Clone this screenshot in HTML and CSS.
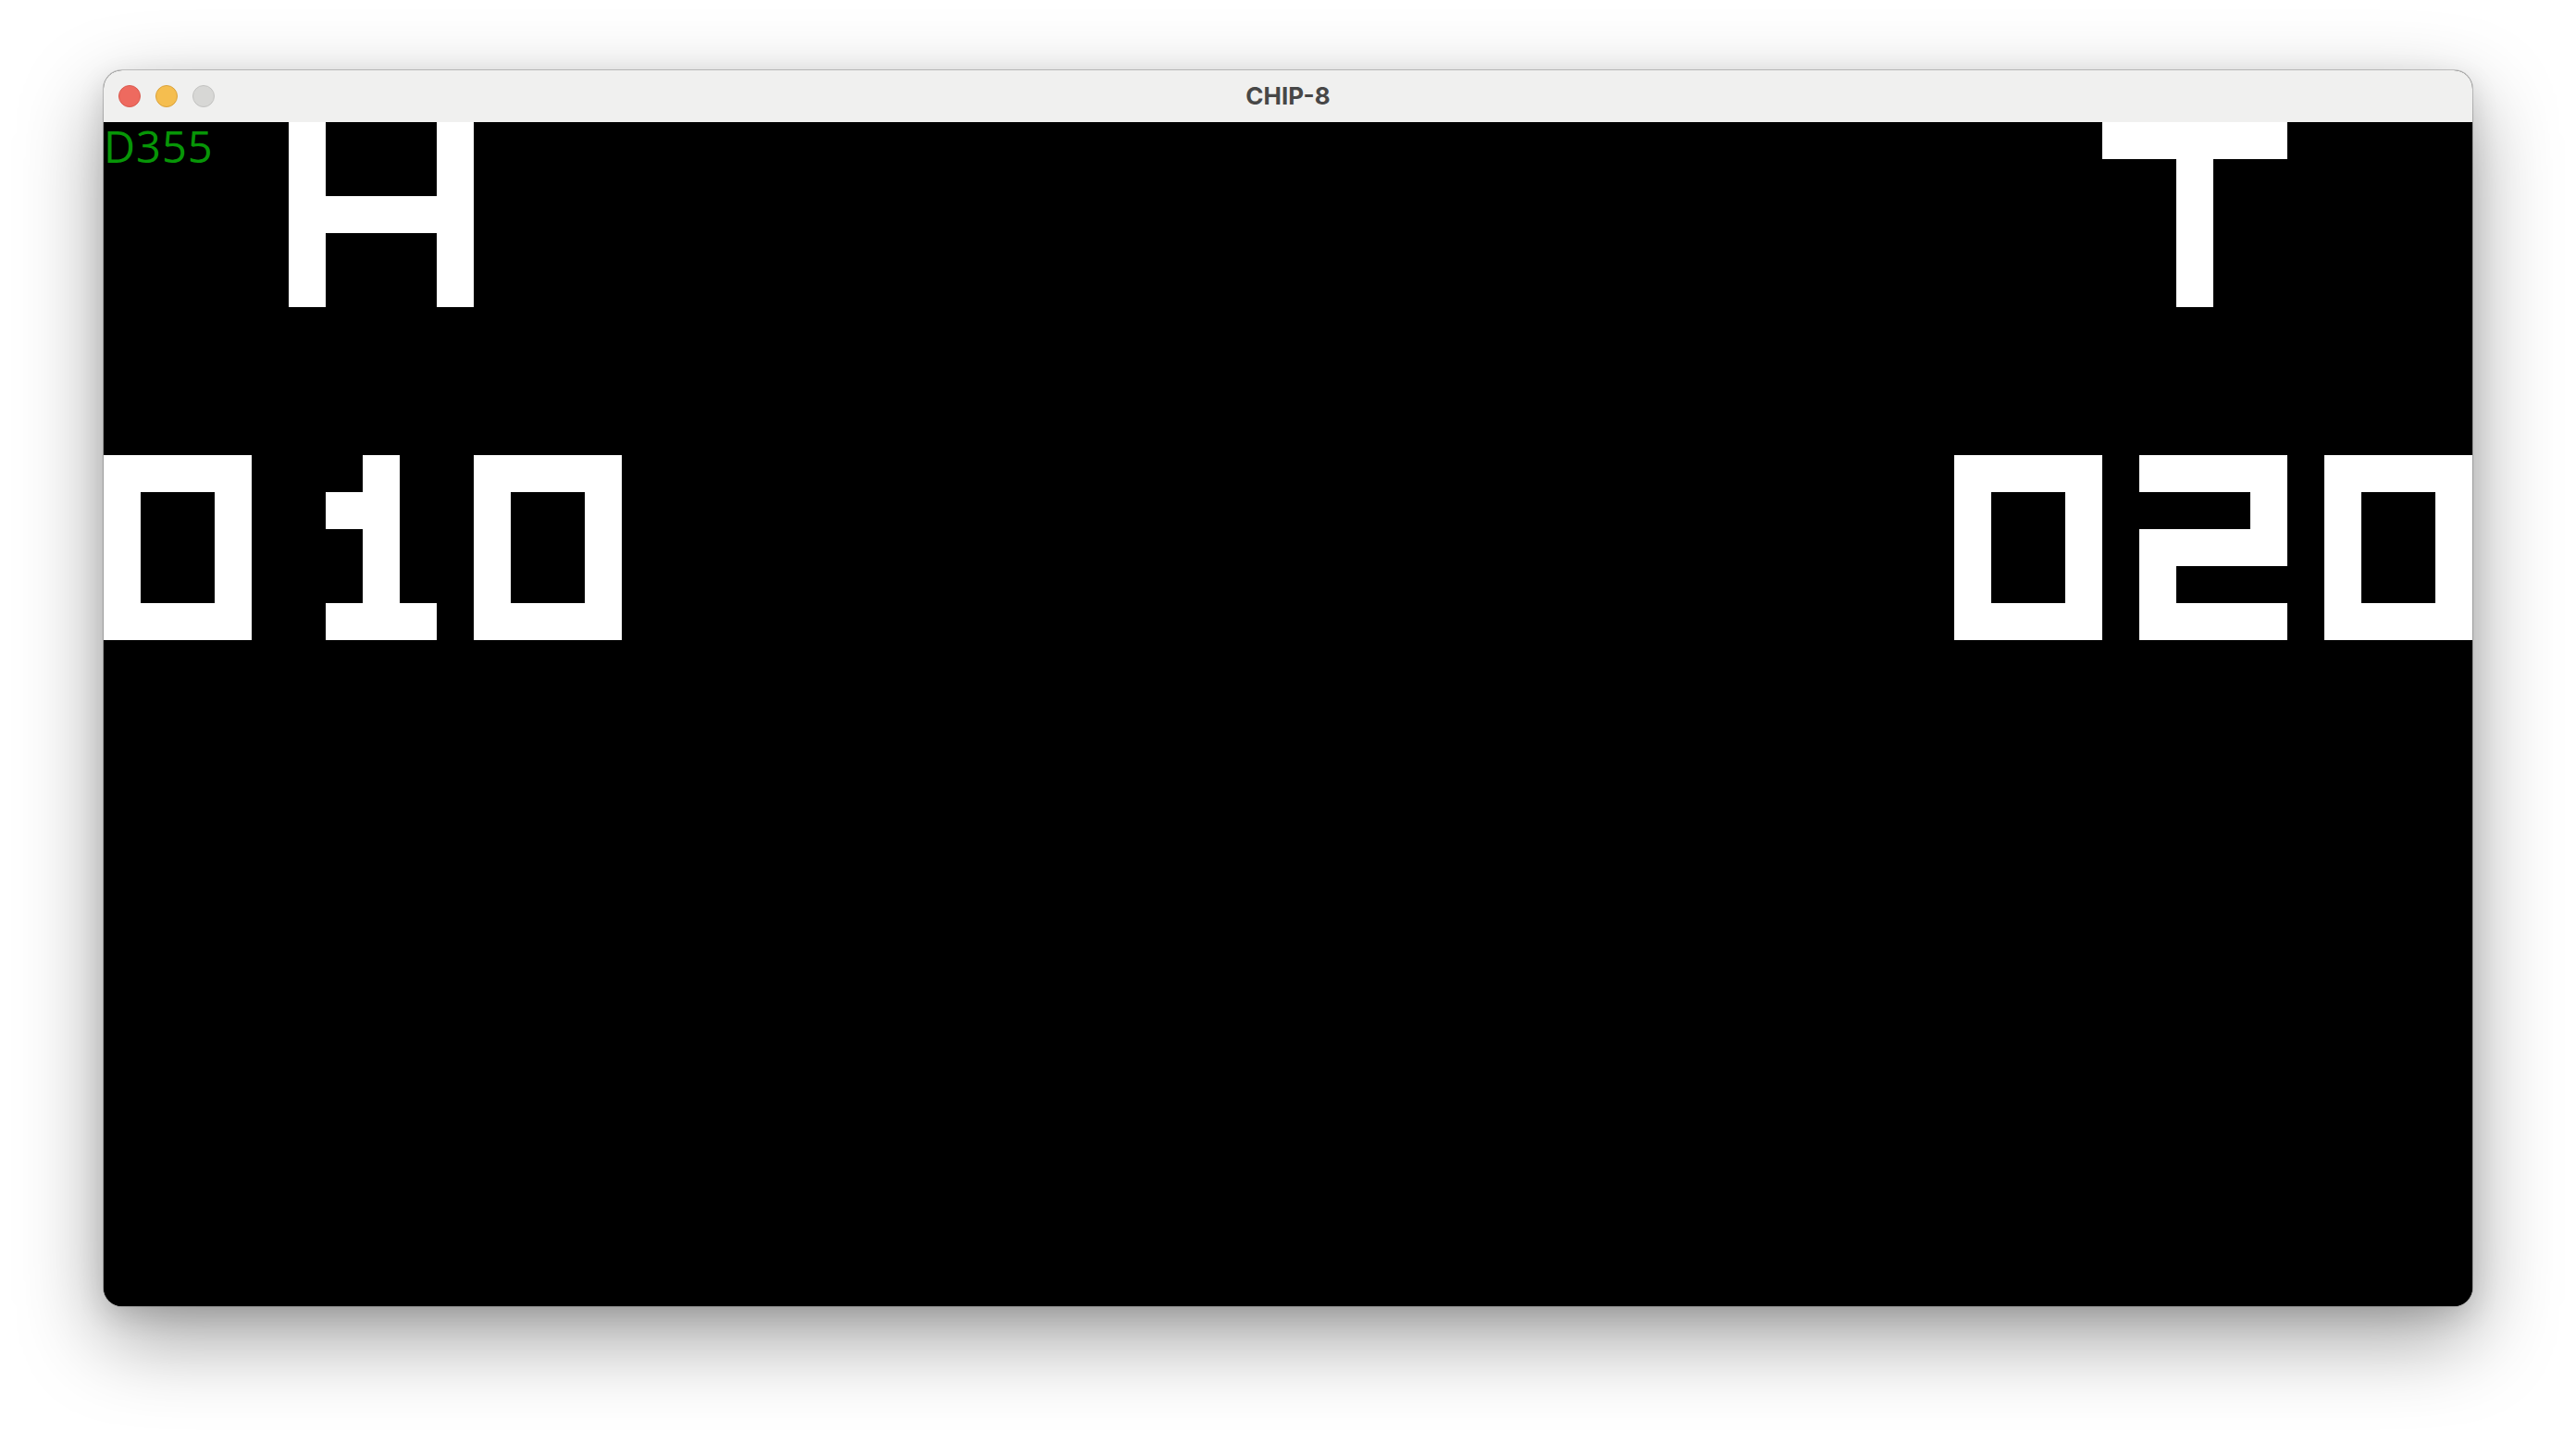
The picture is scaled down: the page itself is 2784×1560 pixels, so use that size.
FILE: index.html
```html
<!DOCTYPE html>
<html lang="en">
<head>
<meta charset="utf-8">
<title>CHIP-8</title>
<link rel="stylesheet" href="styles.css">
</head>
<body>
  <div class="window">
    <div class="titlebar">
      <div class="lights">
        <span class="light close"></span>
        <span class="light minimize"></span>
        <span class="light zoom"></span>
      </div>
      <div class="title">CHIP-8</div>
      <div class="spacer"></div>
    </div>
    <div class="display">
      <svg class="screen" width="2560" height="1280" viewBox="0 0 64 32" shape-rendering="crispEdges" xmlns="http://www.w3.org/2000/svg">
        <defs>
          <g id="d0">
            <rect x="0" y="0" width="4" height="1"/>
            <rect x="0" y="4" width="4" height="1"/>
            <rect x="0" y="1" width="1" height="3"/>
            <rect x="3" y="1" width="1" height="3"/>
          </g>
          <g id="d1">
            <rect x="2" y="0" width="1" height="5"/>
            <rect x="1" y="1" width="1" height="1"/>
            <rect x="1" y="4" width="3" height="1"/>
          </g>
          <g id="d2">
            <rect x="0" y="0" width="4" height="1"/>
            <rect x="3" y="1" width="1" height="1"/>
            <rect x="0" y="2" width="4" height="1"/>
            <rect x="0" y="3" width="1" height="1"/>
            <rect x="0" y="4" width="4" height="1"/>
          </g>
        </defs>
        <g fill="#ffffff">
          <!-- H -->
          <rect x="5" y="0" width="1" height="5"/>
          <rect x="9" y="0" width="1" height="5"/>
          <rect x="6" y="2" width="3" height="1"/>
          <!-- T -->
          <rect x="54" y="0" width="5" height="1"/>
          <rect x="56" y="1" width="1" height="4"/>
          <!-- 010 -->
          <use href="#d0" x="0" y="9"/>
          <use href="#d1" x="5" y="9"/>
          <use href="#d0" x="10" y="9"/>
          <!-- 020 -->
          <use href="#d0" x="50" y="9"/>
          <use href="#d2" x="55" y="9"/>
          <use href="#d0" x="60" y="9"/>
        </g>
      </svg>
      <span class="fps">D355</span>
    </div>
  </div>
</body>
</html>
```
FILE: styles.css
```css
html, body {
  margin: 0;
  padding: 0;
}

body {
  width: 2784px;
  height: 1560px;
  background: #ffffff;
  overflow: hidden;
  display: flex;
  justify-content: center;
  align-items: flex-start;
  padding-top: 76px;
  box-sizing: border-box;
}

.window {
  width: 2560px;
  height: 1336px;
  border-radius: 20px;
  overflow: hidden;
  display: flex;
  flex-direction: column;
  background: #000;
  box-shadow: 0 0 0 1px rgba(0, 0, 0, 0.2), 0 34px 90px rgba(0, 0, 0, 0.38), 0 10px 30px rgba(0, 0, 0, 0.12);
}

.titlebar {
  height: 56px;
  flex: 0 0 56px;
  background: #f0f0ef;
  display: grid;
  grid-template-columns: 1fr auto 1fr;
  align-items: center;
}

.lights {
  display: flex;
  gap: 16px;
  padding-left: 16px;
}

.light {
  width: 24px;
  height: 24px;
  border-radius: 50%;
  box-sizing: border-box;
  border: 1px solid;
}

.close {
  background: #ee6a5f;
  border-color: #d85a4f;
}

.minimize {
  background: #f5be4f;
  border-color: #d9a23d;
}

.zoom {
  background: #d7d7d5;
  border-color: #c2c2c0;
}

.title {
  font-family: Inter, "Liberation Sans", sans-serif;
  font-weight: 700;
  font-size: 26px;
  color: #474747;
  line-height: 1;
}

.display {
  position: relative;
  width: 2560px;
  height: 1280px;
  background: #000;
}

.screen {
  display: block;
}

.fps {
  position: absolute;
  top: 3px;
  left: 0;
  font-family: "Open Sans", "DejaVu Sans", sans-serif;
  font-size: 47px;
  letter-spacing: 1px;
  line-height: 1;
  color: #079607;
}
```
